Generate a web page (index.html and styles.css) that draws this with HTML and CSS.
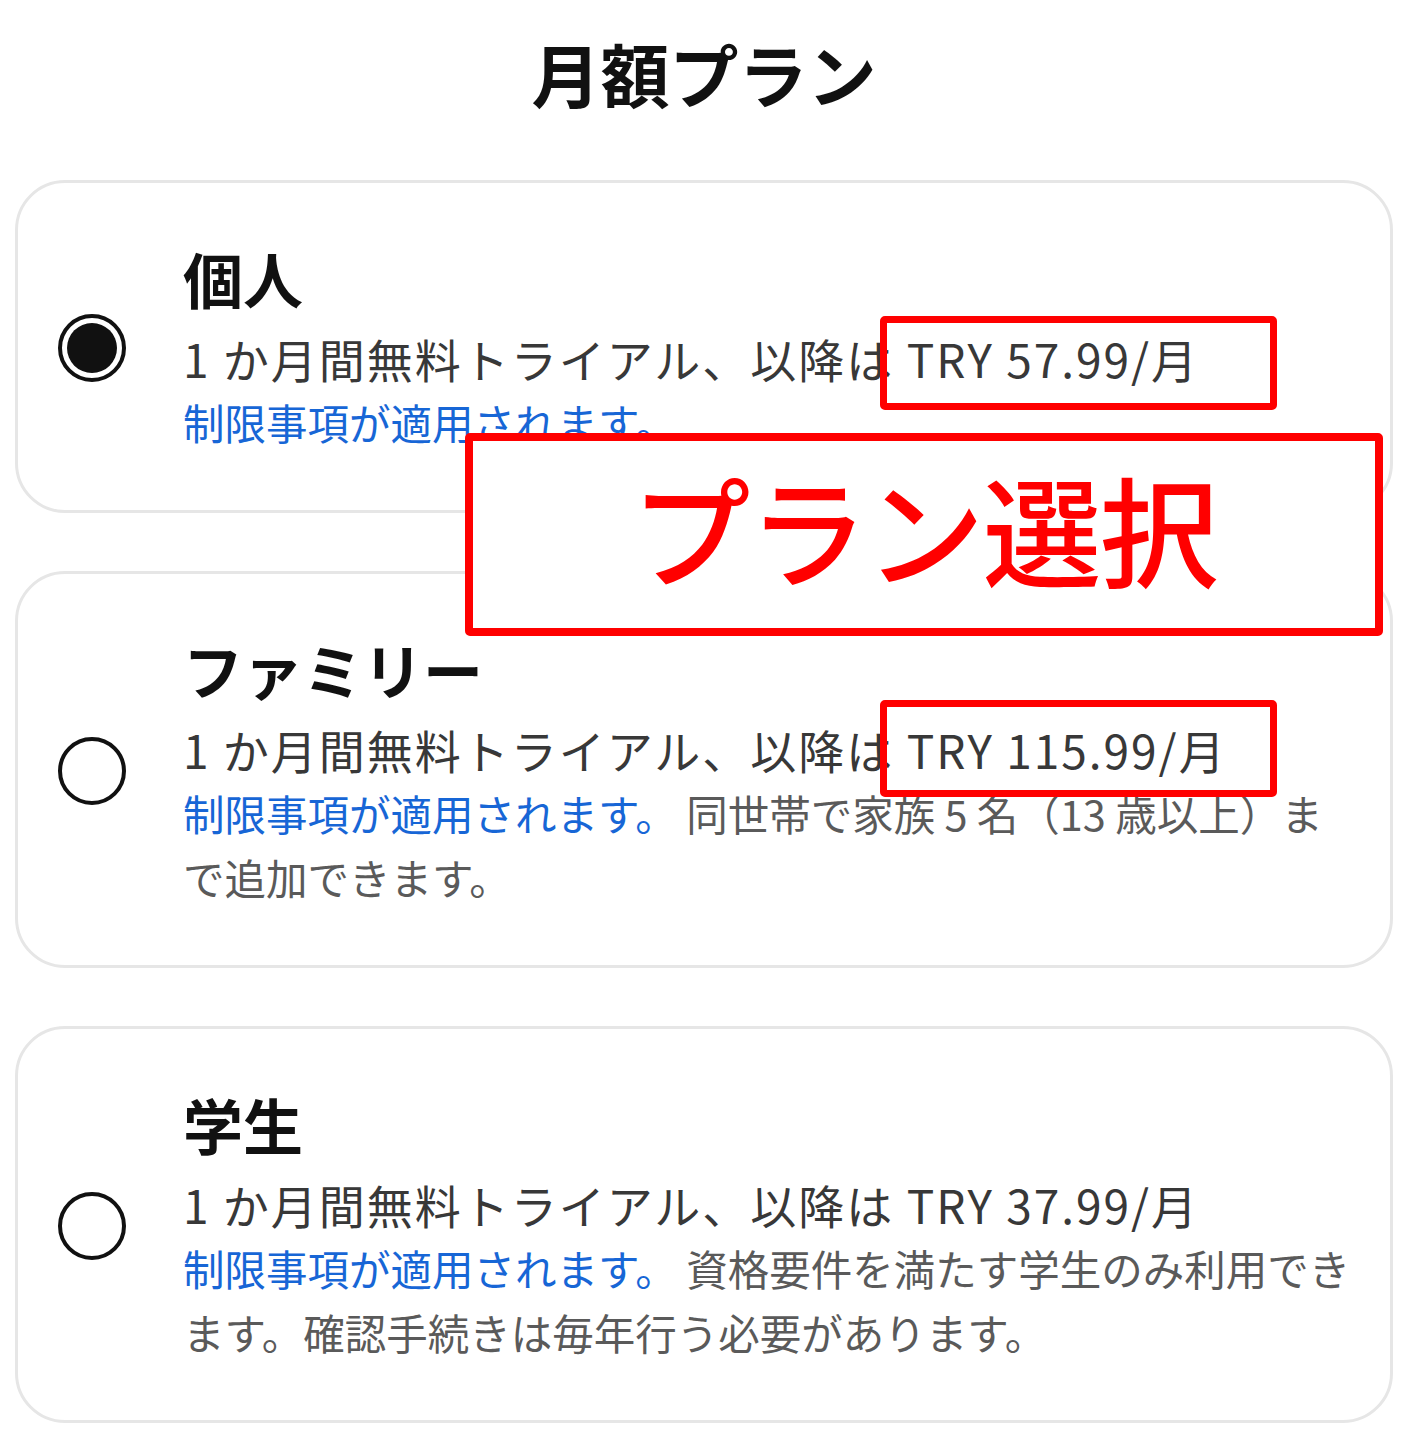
FILE: index.html
```html
<!DOCTYPE html>
<html lang="ja">
<head>
<meta charset="utf-8">
<title>月額プラン</title>
<link rel="stylesheet" href="styles.css">
</head>
<body>
<main class="page">
  <h1 class="heading">月額プラン</h1>
  <div class="plans">
    <div class="plan">
      <span class="radio radio-on"><span class="radio-dot"></span></span>
      <div class="plan-body">
        <h2 class="plan-name">個人</h2>
        <p class="plan-price">1 か月間無料トライアル、以降は TRY 57.99/月</p>
        <p class="plan-note"><span class="plan-link">制限事項が適用されます。</span></p>
      </div>
    </div>
    <div class="plan">
      <span class="radio"></span>
      <div class="plan-body">
        <h2 class="plan-name">ファミリー</h2>
        <p class="plan-price">1 か月間無料トライアル、以降は TRY 115.99/月</p>
        <p class="plan-note"><span class="plan-link">制限事項が適用されます。</span> 同世帯で家族 5 名（13 歳以上）まで追加できます。</p>
      </div>
    </div>
    <div class="plan">
      <span class="radio"></span>
      <div class="plan-body">
        <h2 class="plan-name">学生</h2>
        <p class="plan-price">1 か月間無料トライアル、以降は TRY 37.99/月</p>
        <p class="plan-note"><span class="plan-link">制限事項が適用されます。</span> 資格要件を満たす学生のみ利用できます。確認手続きは毎年行う必要があります。</p>
      </div>
    </div>
  </div>

  <div class="mark mark-price-one"></div>
  <div class="mark mark-callout"><span class="callout-text">プラン選択</span></div>
  <div class="mark mark-price-two"></div>
</main>
</body>
</html>
```

FILE: styles.css
```css
* { box-sizing: border-box; }

html, body {
  margin: 0;
  background: #ffffff;
}

body {
  font-family: "Noto Sans CJK JP", "Noto Sans", sans-serif;
  color: #0f0f0f;
}

.page {
  position: relative;
  width: 1416px;
  padding: 26px 23px 0 15px;
}

.heading {
  margin: 0;
  font-size: 69px;
  line-height: 94px;
  font-weight: 700;
  text-align: center;
  color: #111111;
}

.plans {
  margin-top: 60px;
  display: flex;
  flex-direction: column;
  gap: 58px;
}

.plan {
  display: flex;
  align-items: center;
  border: 3px solid #e6e6e6;
  border-radius: 50px;
  padding: 59px 30px 56px 40px;
  background: #ffffff;
}

.radio {
  flex: 0 0 auto;
  width: 68px;
  height: 68px;
  border: 4px solid #111111;
  border-radius: 50%;
  margin-right: 57px;
  display: flex;
  align-items: center;
  justify-content: center;
}

.radio-dot {
  width: 50px;
  height: 50px;
  border-radius: 50%;
  background: #111111;
}

.plan-body {
  flex: 1 1 auto;
  min-width: 0;
}

.plan-name {
  margin: 0 0 12px;
  font-size: 60px;
  line-height: 72px;
  font-weight: 700;
  color: #111111;
}

.plan-price,
.plan-note {
  margin: 0;
  line-height: 64px;
  font-weight: 400;
}

.plan-price {
  font-size: 46px;
  letter-spacing: 2px;
  color: #383838;
}

.plan-note {
  font-size: 41.5px;
  color: #5a5a5a;
}

.plan-link {
  color: #1766d6;
}

.mark {
  position: absolute;
  border: 7px solid #ff0000;
  border-radius: 5px;
}

.mark-price-one {
  left: 880px;
  top: 316px;
  width: 397px;
  height: 94px;
}

.mark-price-two {
  left: 880px;
  top: 700px;
  width: 397px;
  height: 97px;
}

.mark-callout {
  left: 465px;
  top: 433px;
  width: 918px;
  height: 203px;
  border-width: 8px;
  background: #ffffff;
  display: flex;
  align-items: center;
  justify-content: center;
  padding-bottom: 14px;
}

.callout-text {
  font-size: 119px;
  line-height: 1;
  font-weight: 500;
  color: #ff0000;
  letter-spacing: -2px;
}
```
